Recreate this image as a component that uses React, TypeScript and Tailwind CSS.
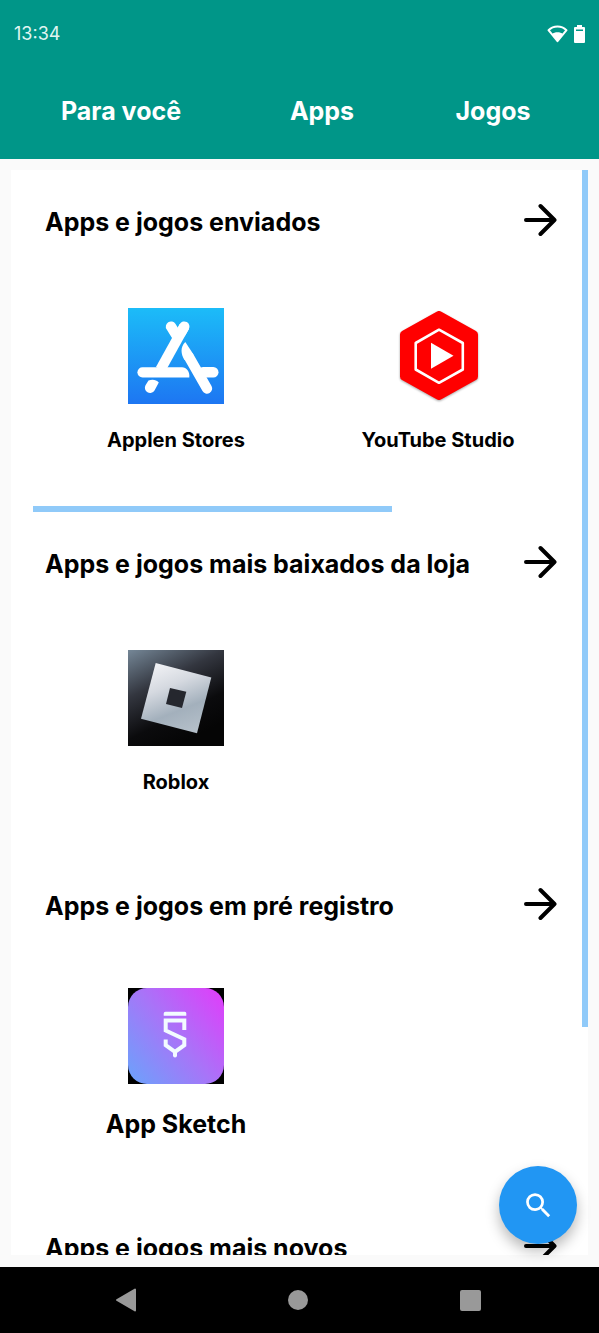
import type { ReactNode } from 'react';
import { MdSearch } from 'react-icons/md';

function ArrowIcon() {
  return (
    <svg viewBox="0 0 34 34" className="size-[34px]" fill="none" stroke="#000" strokeWidth="4" strokeLinecap="round" strokeLinejoin="round" aria-hidden="true">
      <path d="M3 17H31M17.5 3L31.5 17L17.5 31" />
    </svg>
  );
}

function StoreLogo() {
  return (
    <svg viewBox="0 0 96 96" className="size-24" aria-hidden="true">
      <defs>
        <linearGradient id="store" x1="0" y1="0" x2="0" y2="1">
          <stop offset="0" stopColor="#1cbcf8" />
          <stop offset="1" stopColor="#1d76f2" />
        </linearGradient>
      </defs>
      <rect width="96" height="96" fill="url(#store)" />
      <g stroke="#fff" strokeWidth="10.4" strokeLinecap="round" fill="none">
        <path d="M43 18.6L49.5 29" />
        <path d="M56.3 18.6L32.500 61.500" strokeLinecap="butt" />
        <path d="M56.3 18.6L53 24.5" />
        <path d="M79 80.5L61 49" />
        <path d="M75 64.3H85.3" />
      </g>
      <path d="M14.5 59.2H54c4.5 0 8 4.500 7.300 10.200H14.500a5.100 5.100 0 0 1 0-10.200z" fill="#fff" />
      <path d="M57.300 34C52 39.500 52.800 46 56.500 52L65.500 46.500z" fill="#fff" />
      <path d="M20.500 72.500c4-1.500 7.800-.8 10.300 2L26.500 82.500a5.200 5.200 0 0 1-9-5.200z" fill="#fff" />
    </svg>
  );
}

function StudioLogo() {
  return (
    <svg viewBox="0 0 96 96" className="size-24" aria-hidden="true">
      <path
        d="M49 7L84 26.500V68.500L49 88L14 68.500V26.500z"
        fill="#f00"
        stroke="#f00"
        strokeWidth="8"
        strokeLinejoin="round"
        className="drop-shadow-[0_1px_1px_rgba(0,0,0,0.35)]"
      />
      <path d="M49 21.700L72.800 35V61.500L49 74.800L25.700 61.500V35z" fill="none" stroke="#fff" strokeWidth="2.600" strokeLinejoin="round" />
      <path d="M41 34.700L63.500 47.700L41 60.700z" fill="#fff" />
    </svg>
  );
}

function RobloxLogo() {
  return (
    <svg viewBox="0 0 96 96" className="size-24" aria-hidden="true">
      <defs>
        <linearGradient id="rbxBack" x1="0" y1="0" x2="0.5" y2="1">
          <stop offset="0" stopColor="#758797" />
          <stop offset="0.4" stopColor="#33363f" />
          <stop offset="0.75" stopColor="#0b0b0d" />
          <stop offset="1" stopColor="#050505" />
        </linearGradient>
        <linearGradient id="rbxTile" x1="0.2" y1="0" x2="0.6" y2="1">
          <stop offset="0" stopColor="#f2f3f6" />
          <stop offset="0.35" stopColor="#d5d9e0" />
          <stop offset="0.7" stopColor="#a3b0bc" />
          <stop offset="1" stopColor="#b3bec8" />
        </linearGradient>
      </defs>
      <rect width="96" height="96" fill="url(#rbxBack)" />
      <path d="M27.700 13L83.300 27.500L69 83.300L13 68.700z" fill="url(#rbxTile)" />
      <path d="M42 38L38 54L54 58L58.300 41.800z" fill="#25272e" />
    </svg>
  );
}

function SketchLogo() {
  return (
    <svg viewBox="0 0 96 96" className="size-24" aria-hidden="true">
      <defs>
        <linearGradient id="sketch" x1="0" y1="0.9" x2="1" y2="0.1">
          <stop offset="0" stopColor="#6f9ffb" />
          <stop offset="0.5" stopColor="#a874f8" />
          <stop offset="1" stopColor="#dd40fa" />
        </linearGradient>
      </defs>
      <rect width="96" height="96" fill="#000" />
      <rect width="96" height="96" rx="19" fill="url(#sketch)" />
      <path d="M37.500 23.700H56.800a1.500 1.500 0 0 1 1.500 1.500V27.700H35.700V25.500a1.800 1.800 0 0 1 1.800-1.800z" fill="#f2fbff" />
      <path
        d="M56.300 42V32.600H37.700V42.500L56.300 51.300V57.200L47 63.800V68M37.700 51.500V57.200L47 63.800"
        fill="none"
        stroke="#f2fbff"
        strokeWidth="4"
      />
      <circle cx="47" cy="67.500" r="2" fill="#f2fbff" />
    </svg>
  );
}

type AppItem = { name: string; logo: ReactNode; large?: boolean };
type Shelf = { title: string; apps: AppItem[]; scrollable?: boolean };

const shelves: Shelf[] = [
  {
    title: 'Apps e jogos enviados',
    scrollable: true,
    apps: [
      { name: 'Applen Stores', logo: <StoreLogo /> },
      { name: 'YouTube Studio', logo: <StudioLogo /> },
    ],
  },
  { title: 'Apps e jogos mais baixados da loja', apps: [{ name: 'Roblox', logo: <RobloxLogo /> }] },
  { title: 'Apps e jogos em pré registro', apps: [{ name: 'App Sketch', logo: <SketchLogo />, large: true }] },
  { title: 'Apps e jogos mais novos', apps: [] },
];

function ShelfSection({ title, apps, scrollable }: Shelf) {
  return (
    <section className="mb-2.5">
      <div className="flex h-20 items-center justify-between px-3">
        <h2 className="pt-[3px] text-[25px] leading-8 font-bold whitespace-nowrap">{title}</h2>
        <button type="button" aria-label={title}>
          <ArrowIcon />
        </button>
      </div>
      <div className="grid h-[239px] grid-cols-2 items-center pl-3">
        {apps.map((app) => (
          <a key={app.name} href="#" className="flex flex-col items-center gap-6">
            {app.logo}
            <span className={app.large ? 'text-[25px] leading-8 font-bold' : 'text-xl leading-6 font-bold'}>{app.name}</span>
          </a>
        ))}
      </div>
      <div className="mt-[7px] h-1.5">{scrollable && <div className="h-full w-[67%] bg-[#90caf9]" />}</div>
    </section>
  );
}

export default function App() {
  return (
    <div className="relative flex h-screen flex-col bg-[#fafafa] font-['Inter',sans-serif] text-black">
      <header className="bg-[#009688] pb-1.5 text-white">
        <div className="flex h-[68px] items-center justify-between px-3.5">
          <span className="text-lg text-[#e0f5f2]">13:34</span>
          <div className="flex items-center gap-1.5">
            <svg viewBox="0 0 21 18" className="h-[18px] w-[21px]" aria-hidden="true">
              <path d="M1.500 5.200C6.500.3 14.500.3 19.500 5.200L10.500 16.200z" fill="none" stroke="#fff" strokeWidth="2" strokeLinejoin="round" />
              <path d="M4.800 9.200C8 6.600 13 6.600 16.200 9.200L10.500 16.500z" fill="#fff" />
            </svg>
            <svg viewBox="0 0 11 18" className="h-[18px] w-[11px]" aria-hidden="true">
              <path d="M3 0H8V2H10a1 1 0 0 1 1 1V17a1 1 0 0 1-1 1H1a1 1 0 0 1-1-1V3a1 1 0 0 1 1-1H3z" fill="#fff" />
              <path d="M2 4.500H9V6H2z" fill="#009688" />
            </svg>
          </div>
        </div>
        <nav className="grid h-[85px] grid-cols-[220fr_182fr_160fr] items-center pr-[26px] pl-[11px] text-[25px] leading-8 font-bold">
          <a href="#" className="text-center">Para você</a>
          <a href="#" className="text-center">Apps</a>
          <a href="#" className="text-center">Jogos</a>
        </nav>
      </header>

      <div className="flex min-h-0 flex-1 flex-col p-[11px] pb-3">
        <main className="relative min-h-0 flex-1 overflow-hidden bg-white pt-2.5 pr-[19px] pl-[22px]">
          {shelves.map((shelf) => (
            <ShelfSection key={shelf.title} {...shelf} />
          ))}
          <div className="absolute top-0 right-0 h-[79%] w-1.5 bg-[#90caf9]" />
        </main>
      </div>

      <footer className="grid h-[66px] grid-cols-3 place-items-center bg-black pr-[43px] pl-10">
        <button type="button" aria-label="Voltar">
          <svg viewBox="0 0 24 24" className="size-6" aria-hidden="true">
            <path d="M21 1.500V22.500L3 12z" fill="#999" stroke="#999" strokeWidth="2" strokeLinejoin="round" />
          </svg>
        </button>
        <button type="button" aria-label="Início" className="size-5 rounded-full bg-[#999]" />
        <button type="button" aria-label="Recentes" className="size-[21px] rounded-xs bg-[#999]" />
      </footer>

      <button
        type="button"
        aria-label="Pesquisar"
        className="absolute right-[22px] bottom-[89px] flex size-[78px] items-center justify-center rounded-full bg-[#2196f3] text-white shadow-[0_7px_14px_rgba(0,0,0,0.28)]"
      >
        <MdSearch className="size-[33px]" />
      </button>
    </div>
  );
}
